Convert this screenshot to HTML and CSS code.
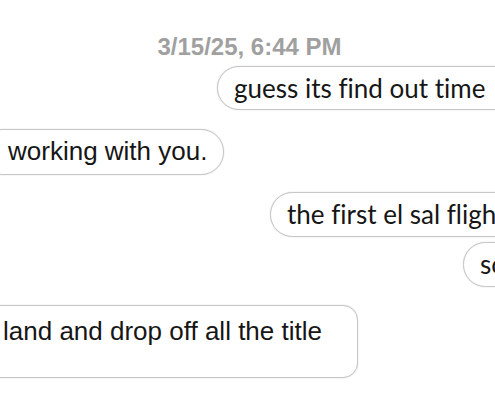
FILE: index.html
```html
<!DOCTYPE html>
<html>
<head>
<meta charset="utf-8">
<link rel="stylesheet" href="styles.css">
</head>
<body>
<div class="thread">
  <div class="stamp">3/15/25, 6:44 PM</div>
  <div class="row row-out row-b1"><div class="bubble pill geo">guess its find out time</div></div>
  <div class="row row-in row-b2"><div class="bubble pill sans b2">working with you.</div></div>
  <div class="row row-out row-b3"><div class="bubble pill geo">the first el sal flight</div></div>
  <div class="row row-out row-b4"><div class="bubble pill geo">so</div></div>
  <div class="row row-in row-b5"><div class="bubble box sans b5">land and drop off all the title</div></div>
</div>
</body>
</html>
```
FILE: styles.css
```css
html, body {
  margin: 0;
  padding: 0;
  background: #ffffff;
}
body {
  width: 495px;
  height: 400px;
  overflow: hidden;
}
.thread {
  display: flex;
  flex-direction: column;
  padding-top: 35px;
}
.stamp {
  font-family: "Liberation Sans", Arial, sans-serif;
  font-weight: 600;
  font-size: 24px;
  line-height: 24px;
  color: #a0a0a0;
  text-align: center;
  padding-left: 4px;
}
.row {
  display: flex;
  white-space: nowrap;
}
.bubble {
  box-sizing: border-box;
  background: #fff;
  border: 1.5px solid #c6c6c6;
  box-shadow: 0 0 1.5px rgba(0,0,0,0.18);
  color: #161616;
  flex: none;
}
.pill {
  height: 45px;
  border-radius: 23px;
  padding: 0 16px;
  line-height: 42px;
}
.geo {
  font-family: Lato, "Liberation Sans", sans-serif;
  font-size: 26px;
  font-variant-ligatures: none;
  padding-right: 40px;
}
.sans {
  font-family: "Liberation Sans", Arial, sans-serif;
  font-size: 26px;
}
.row-b1 { margin-top: 7px; padding-left: 217px; }
.row-b1 .bubble { height: 44px; }
.row-b2 { margin-top: 19px; }
.b2 {
  height: 46px;
  margin-left: -20px;
  padding: 0 16px 0 27px;
  line-height: 43px;
}
.row-b3 { margin-top: 17px; padding-left: 270px; }
.row-b4 { margin-top: 5px; padding-left: 463px; }
.row-b5 { margin-top: 18px; }
.b5 {
  height: 73px;
  margin-left: -20px;
  padding: 10px 35px 0 22px;
  line-height: 30px;
  border-radius: 15px;
}
```
